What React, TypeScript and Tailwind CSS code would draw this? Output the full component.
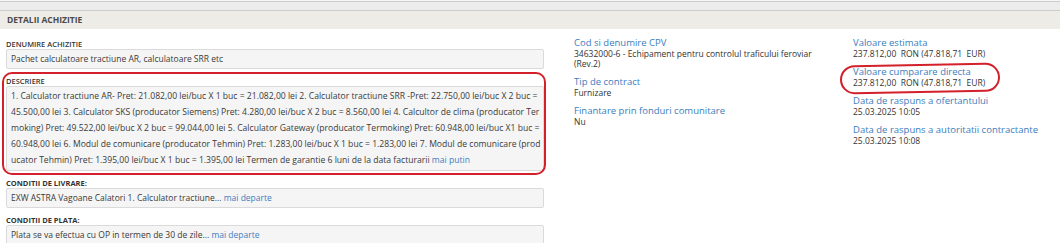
const descLines = [
  "1. Calculator tractiune AR- Pret: 21.082,00 lei/buc X 1 buc = 21.082,00 lei 2. Calculator tractiune SRR -Pret: 22.750,00 lei/buc X 2 buc =",
  "45.500,00 lei 3. Calculator SKS (producator Siemens) Pret: 4.280,00 lei/buc X 2 buc = 8.560,00 lei 4. Calcultor de clima (producator Ter",
  "moking) Pret: 49.522,00 lei/buc X 2 buc = 99.044,00 lei 5. Calculator Gateway (producator Termoking) Pret: 60.948,00 lei/buc X1 buc =",
  "60.948,00 lei 6. Modul de comunicare (producator Tehmin) Pret: 1.283,00 lei/buc X 1 buc = 1.283,00 lei 7. Modul de comunicare (prod",
];

function App() {
  return (
    <div className="w-[1060px] h-[243px] overflow-hidden bg-white font-['Open_Sans',sans-serif] text-[#333]">
      <div className="h-[1px] bg-[#f6f6f6]" />
      <div className="h-[10px] border-y border-[#cdcdcd] bg-[#ececec]" />
      <div className="h-[18px] bg-[#edece6] pl-[7px] text-[8.5px] font-bold leading-[18px] text-[#4a4a4a]">
        DETALII ACHIZITIE
      </div>

      <div className="flex">
        <div className="w-[548px] pl-[6px] pr-[4px] pt-[10px]">
          <FieldLabel>DENUMIRE ACHIZITIE</FieldLabel>
          <FieldBox>Pachet calculatoare tractiune AR, calculatoare SRR etc</FieldBox>

          <div className="relative mt-[7px]">
            <FieldLabel>DESCRIERE</FieldLabel>
            <div className="rounded-[2px] border border-[#dadada] bg-[#f5f5f5] px-[4px] pt-[1px] pb-[2px] text-[8.6px] leading-[16px] text-[#3a3a3a] whitespace-nowrap">
              {descLines.map((l) => (
                <div key={l}>{l}</div>
              ))}
              <div>
                ucator Tehmin) Pret: 1.395,00 lei/buc X 1 buc = 1.395,00 lei Termen de garantie 6 luni de la data facturarii{" "}
                <a className="text-[#3f7fc1]">mai putin</a>
              </div>
            </div>
            <div className="pointer-events-none absolute -top-[4px] -left-[4px] -right-[2px] -bottom-[4px] rounded-[10px] border-2 border-[#d3202b]" />
          </div>

          <div className="mt-[7px]">
            <FieldLabel bold>CONDITII DE LIVRARE:</FieldLabel>
            <FieldBox>
              EXW ASTRA Vagoane Calatori 1. Calculator tractiune...{" "}
              <a className="text-[#3f7fc1]">mai departe</a>
            </FieldBox>
          </div>

          <div className="mt-[7px]">
            <FieldLabel bold>CONDITII DE PLATA:</FieldLabel>
            <FieldBox>
              Plata se va efectua cu OP in termen de 30 de zile...{" "}
              <a className="text-[#3f7fc1]">mai departe</a>
            </FieldBox>
          </div>
        </div>

        <div className="ml-[26px] w-[279px] pt-[8px]">
          <Info label="Cod si denumire CPV">
            34632000-6 - Echipament pentru controlul traficului feroviar
            <br />
            (Rev.2)
          </Info>
          <Info label="Tip de contract" spaced>
            Furnizare
          </Info>
          <Info label="Finantare prin fonduri comunitare" spaced>
            Nu
          </Info>
        </div>

        <div className="w-[207px] pt-[8px]">
          <Info label="Valoare estimata">237.812,00  RON (47.818,71  EUR)</Info>
          <div className="relative pt-[7px]">
            <Info label="Valoare cumparare directa">237.812,00  RON (47.818,71  EUR)</Info>
            <div className="pointer-events-none absolute top-[5px] -left-[13px] h-[29px] w-[160px] -rotate-1 rounded-[15px] border-2 border-[#d3202b]" />
          </div>
          <Info label="Data de raspuns a ofertantului" spaced>
            25.03.2025 10:05
          </Info>
          <Info label="Data de raspuns a autoritatii contractante" spaced>
            25.03.2025 10:08
          </Info>
        </div>
      </div>
    </div>
  );
}

function FieldLabel({ children, bold }: { children: React.ReactNode; bold?: boolean }) {
  return (
    <div
      className={
        bold
          ? "text-[7.5px] font-bold leading-[10px] text-[#333]"
          : "text-[7.5px] font-semibold leading-[10px] text-[#333]"
      }
    >
      {children}
    </div>
  );
}

function FieldBox({ children }: { children: React.ReactNode }) {
  return (
    <div className="h-[20px] rounded-[2px] border border-[#dadada] bg-[#f5f5f5] px-[4px] text-[8.5px] leading-[18px] text-[#3a3a3a] whitespace-nowrap">
      {children}
    </div>
  );
}

function Info({
  label,
  children,
  spaced,
}: {
  label: string;
  children: React.ReactNode;
  spaced?: boolean;
}) {
  return (
    <div className={spaced ? "mt-[7px]" : ""}>
      <div className="text-[9.5px] leading-[12px] text-[#3b7dbd] whitespace-nowrap">{label}</div>
      <div className="text-[8.5px] leading-[10px] text-[#333] whitespace-pre">{children}</div>
    </div>
  );
}

export default App;
